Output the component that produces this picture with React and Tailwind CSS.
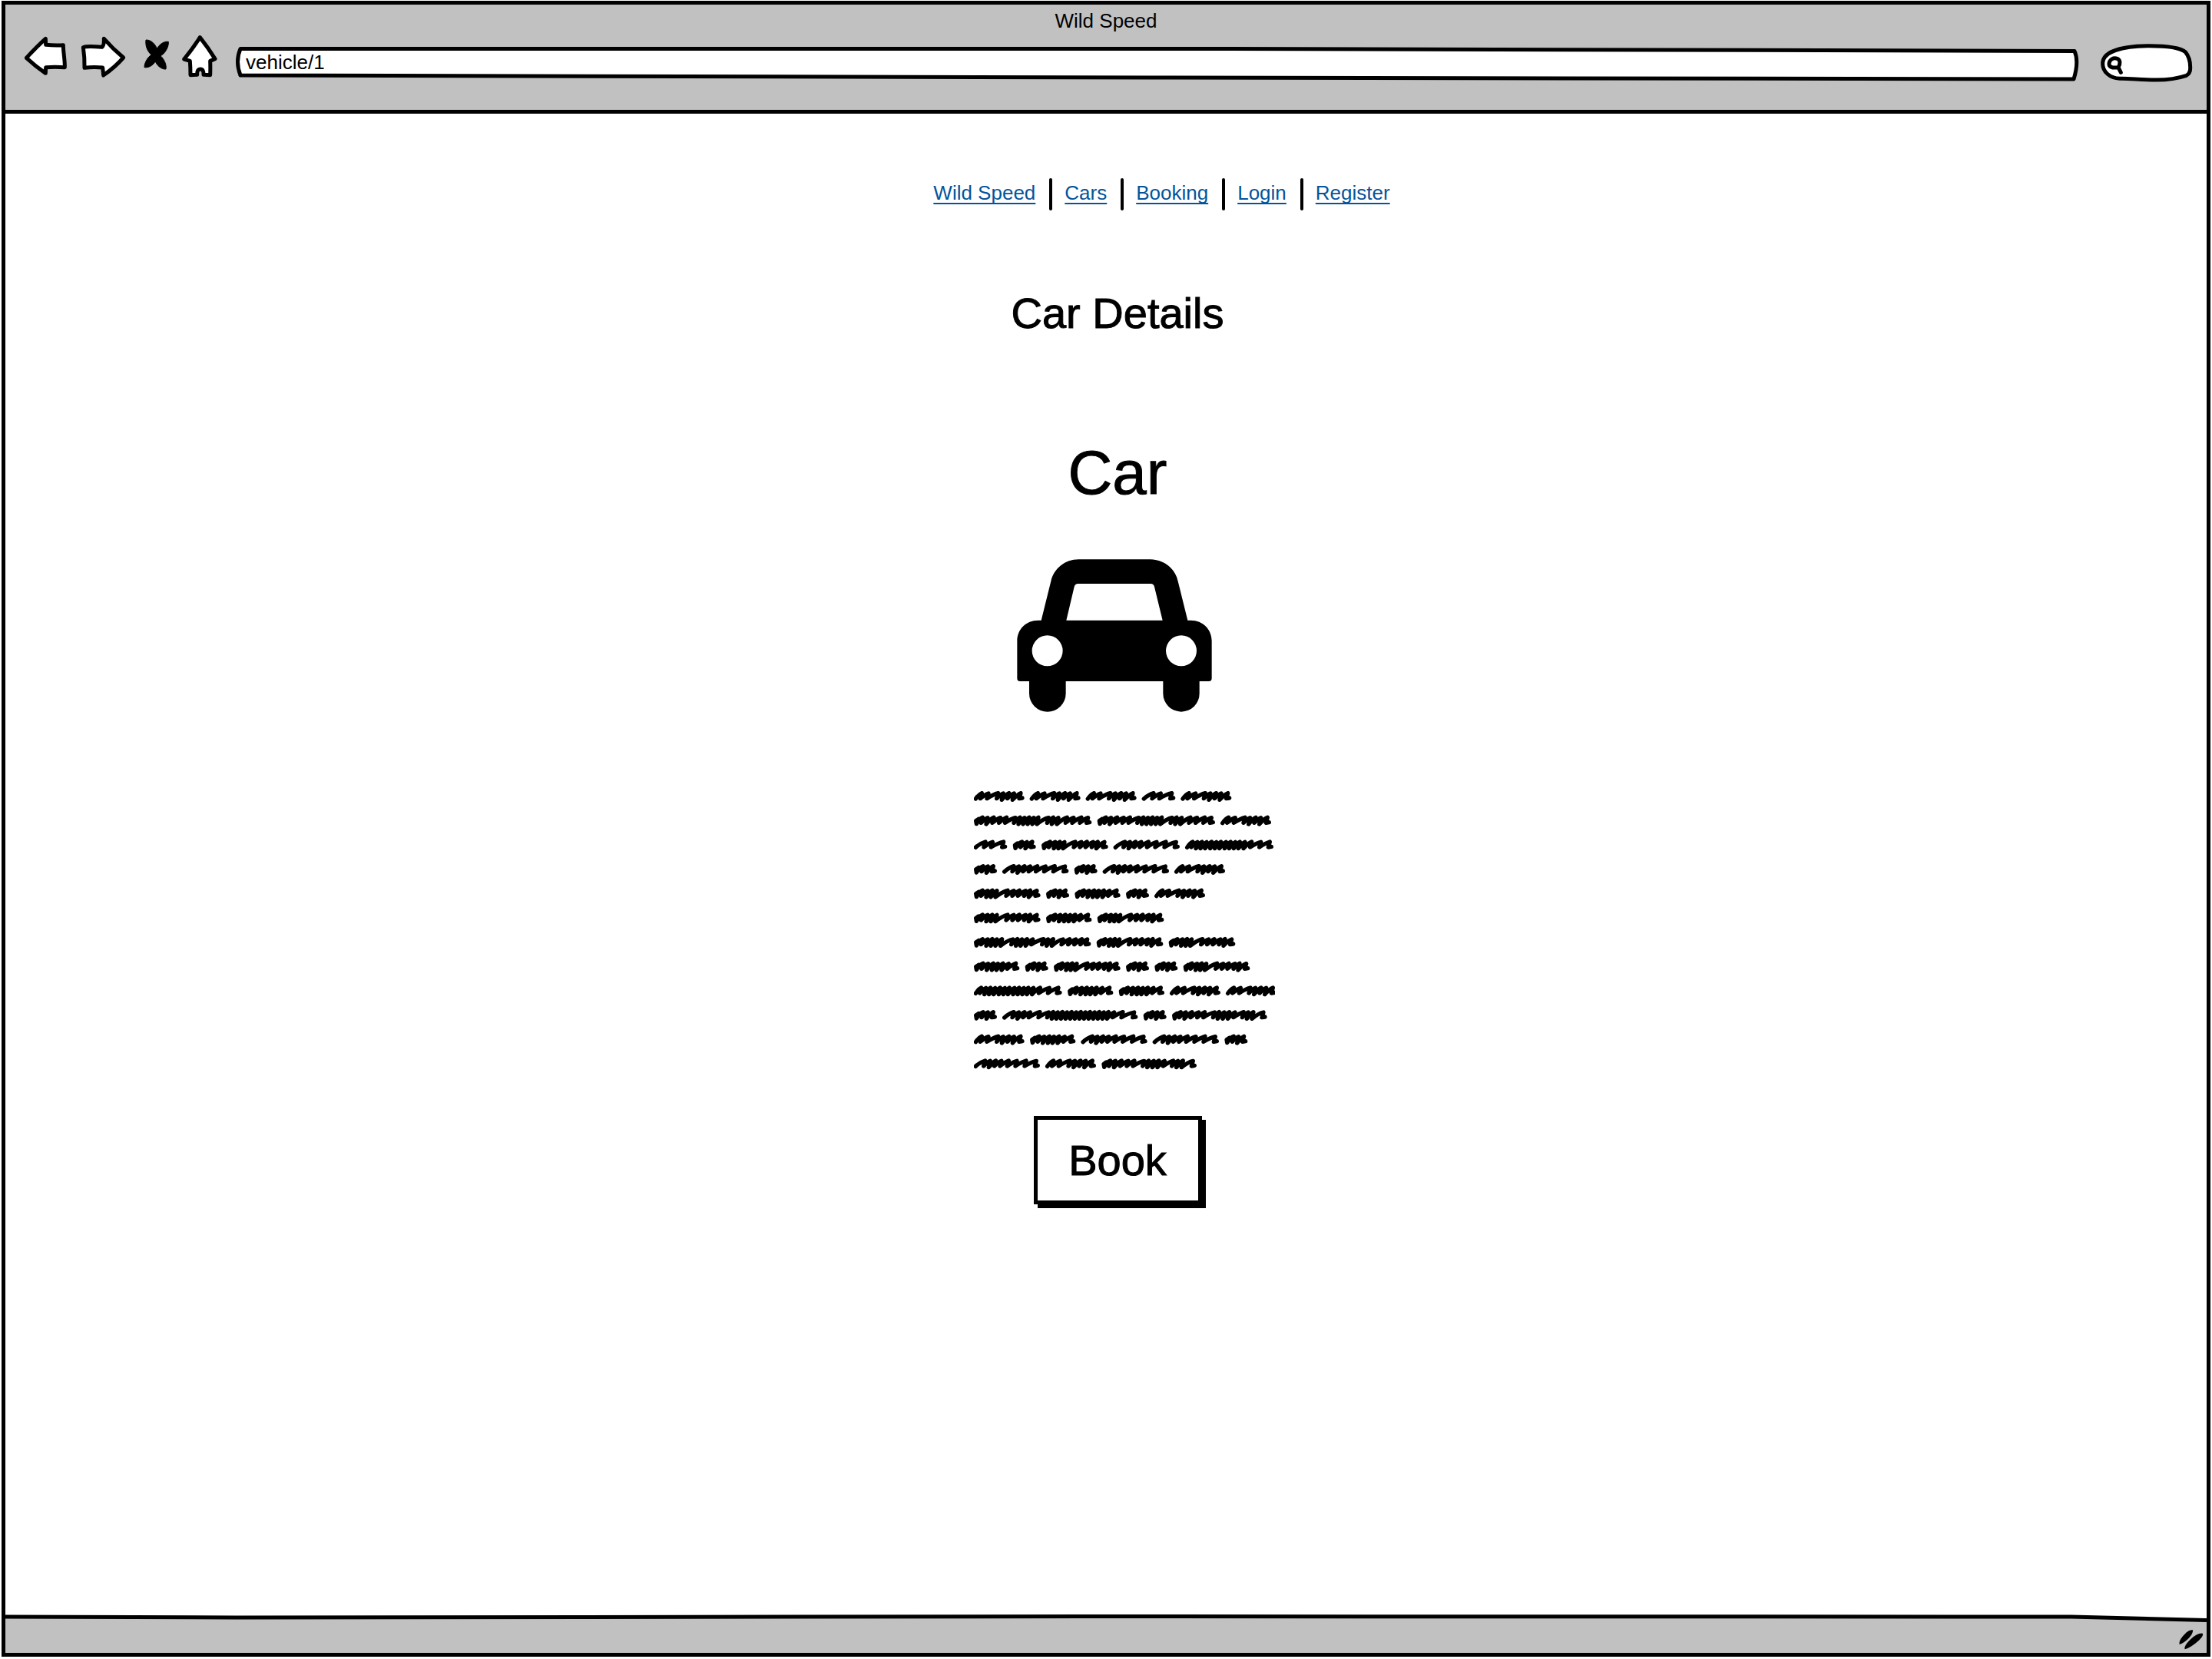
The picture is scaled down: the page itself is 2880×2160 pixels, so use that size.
const LINKS = ["Wild Speed", "Cars", "Booking", "Login", "Register"];

// Horizontal advance of each zigzag tooth; "dense" words start with a thick blob.
const WORDS = {
  a: { width: 192, teeth: [24, 26, 38, 20, 22, 20, 26] },
  b: { width: 125, teeth: [38, 28, 43] },
  c: { width: 85, dense: true, teeth: [29, 19, 21] },
  d: { width: 255, dense: true, teeth: [27, 20, 18, 18, 42, 24, 22, 24, 18, 26] },
  e: { width: 253, teeth: [37, 20, 22, 22, 28, 32, 36, 40] },
  f: { width: 173, dense: true, teeth: [29, 20, 20, 18, 20, 22, 28] },
  g: { width: 455, dense: true, teeth: [27, 20, 24, 26, 24, 34, 18, 18, 18, 18, 18, 40, 18, 20, 34, 26, 30, 26] },
  k: { width: 452, dense: true, teeth: [27, 20, 18, 18, 20, 42, 18, 18, 20, 22, 42, 18, 20, 38, 26, 24, 24, 21] },
  h: { width: 339, teeth: [22, 18, 18, 18, 20, 18, 18, 20, 18, 18, 18, 20, 26, 36, 35] },
  i: { width: 366, dense: true, teeth: [27, 20, 24, 26, 24, 38, 18, 20, 20, 22, 34, 18, 20, 39] },
  j: { width: 523, teeth: [37, 20, 22, 22, 38, 34, 18, 18, 18, 18, 18, 18, 18, 18, 18, 18, 18, 18, 18, 22, 34, 44] },
};
const ROWS = ["aaaba", "gga", "bcdeh", "cecea", "dcfca", "dfd", "kdd", "fcdccd", "hffaa", "cjci", "afeec", "eai"];

function wordPath(word, left, top) {
  let x = left + 7;
  let d = word.dense ? `M${left + 18} ${top + 14}L${left + 8} ${top + 21}L${left + 10} ${top + 33}` : `M${x} ${top + 30}`;
  word.teeth.forEach((step, n) => {
    const next = x + step;
    const low = step < 21 ? 34 : 29;
    d += `Q${x + step * 0.5} ${top + 13} ${next} ${top + 8 + (n % 2)}L${next - 6} ${top + low}`;
    x = next;
  });
  return d + `L${x + 6} ${top + 27}`;
}

function Scribble() {
  const paths = [];
  ROWS.forEach((row, r) => {
    let x = 0;
    [...row].forEach((key) => {
      paths.push(wordPath(WORDS[key], x, r * 95));
      x += WORDS[key].width + 27;
    });
  });
  return (
    <svg role="img" aria-label="Car description" viewBox="0 0 1176 1089" className="mt-[103px] ml-[18px] h-[363px] w-[392px]" fill="none" stroke="black" strokeWidth="16" strokeLinecap="round" strokeLinejoin="round">
      {paths.map((d, n) => (
        <path key={n} d={d} />
      ))}
    </svg>
  );
}

function IconButton({ label, viewBox, size, d, solid }) {
  return (
    <button type="button" aria-label={label} className="shrink-0">
      <svg viewBox={viewBox} className={`block h-16 ${size}`} fill={solid ? "black" : "white"} stroke="black" strokeWidth={solid ? 3 : 15} strokeLinejoin="round">
        <path d={d} />
      </svg>
    </button>
  );
}

function Toolbar() {
  return (
    <div className="mt-[2px] flex gap-[14px] pr-[14px] pl-[23px]">
      <IconButton label="Back" viewBox="90 132 180 192" size="w-[60px]" d="M103 226Q146 180 178 151L179 175Q215 178 247 176C247 205 254 235 253 263Q215 260 179 263L178 286Q140 260 103 226Z" />
      <IconButton label="Forward" viewBox="312 132 192 192" size="w-16" d="M325 185Q340 178 398 184Q407 178 406 151Q440 190 482 225Q450 262 404 294L401 264Q365 260 330 265Q331 225 325 185Z" />
      <IconButton label="Stop" solid viewBox="546 132 120 192" size="w-10" d="M570 156C590 155 606 172 613 190C622 174 640 160 658 163C660 185 642 212 627 218C640 230 652 252 648 270C630 272 612 254 607 240C598 255 580 266 564 263C564 243 578 223 591 214C575 200 567 178 570 156Z" />
      <IconButton label="Home" viewBox="708 132 150 192" size="w-[50px]" d="M781 146Q812 185 840 230L821 238Q822 265 821 293L795 292Q796 270 783 270Q769 270 770 292L744 293Q744 265 742 238L719 231Q753 190 781 146Z" />
      <div className="relative h-16 min-w-0 flex-1">
        <svg viewBox="300 44 2412 64" preserveAspectRatio="none" className="absolute inset-0 h-full w-full" fill="white" stroke="black" strokeWidth="5" strokeLinejoin="round">
          <path vectorEffect="non-scaling-stroke" d="M313 63.500L1600 63.500L2701 66.500Q2707 80 2700 103L1500 101L313 98Q306 80 313 63.500Z" />
        </svg>
        <input aria-label="Address" defaultValue="vehicle/1" className="relative h-16 w-full bg-transparent pt-[10px] pr-5 pl-5 text-[26px] outline-none" />
      </div>
      <div className="relative h-16 w-[133px] shrink-0">
        <svg viewBox="498 132 399 192" className="absolute inset-0 h-full w-full" fill="white" stroke="black" strokeWidth="15" strokeLinecap="round" strokeLinejoin="round">
          <path d="M600 307C560 305 533 280 533 248C533 200 610 180 715 179C790 179 835 185 856 203C870 220 875 245 875 262C876 280 870 290 860 295C830 305 790 312 745 312C680 312 640 306 600 307Z" />
          <path d="M594 263C602 250 603 235 590 229C575 224 560 232 558 248C557 262 570 267 594 263L604 283" />
        </svg>
        <input aria-label="Search" className="relative h-16 w-full bg-transparent pt-[10px] pr-4 pl-10 text-[26px] outline-none" />
      </div>
    </div>
  );
}

function CarIcon() {
  return (
    <svg role="img" aria-label="Car" viewBox="102 504 762 597" className="mt-[72px] mr-2 h-[199px] w-[254px]">
      <path
        fillRule="evenodd"
        d="M235 590C247 540 290 505 343 505H622C675 505 720 540 731 590L769 743H782C828 743 863 778 863 823V970Q863 981 852 981H815V1029A71 71 0 0 1 673 1029V981H293V1029A71.500 71.500 0 0 1 150 1029V981H114Q103 981 103 970V823C103 778 138 743 184 743H197ZM295 743H671L639 612Q636 600 625 600H341Q329 600 326 612ZM281 862A60 60 0 1 0 161 862A60 60 0 1 0 281 862ZM804 862A60 60 0 1 0 684 862A60 60 0 1 0 804 862Z"
      />
    </svg>
  );
}

export default function App() {
  return (
    <div className="flex min-h-screen bg-white px-[2px] pt-px pb-[3px] font-['Liberation_Sans',Arial,sans-serif] text-black">
      <div className="flex flex-1 flex-col border-[5px] border-black">
        <header className="border-b-[5px] border-black bg-[#c1c1c1] pt-[6px] pb-[35px]">
          <p className="text-center text-[26px] leading-[30px]">Wild Speed</p>
          <Toolbar />
        </header>

        <main className="flex flex-1 flex-col items-center pt-[84px]">
          <nav aria-label="Main" className="flex h-[42px] items-center gap-[18px] pl-[145px]">
            {LINKS.map((name, n) => (
              <div key={name} className="flex items-center gap-4">
                {n > 0 && <span className="h-[42px] w-1 rounded-full bg-black" />}
                <a href="#" className="pb-1 text-[26px] leading-[30px] text-[#04549b] underline decoration-2 underline-offset-4 [text-decoration-skip-ink:none]">
                  {name}
                </a>
              </div>
            ))}
          </nav>
          <div className="flex flex-col items-center pl-[30px]">
            <h1 className="mt-[102px] text-[56px] leading-[64px] [-webkit-text-stroke:1px_black]">Car Details</h1>
            <h2 className="mt-[136px] text-[80px] leading-[80px] [-webkit-text-stroke:1px_black]">Car</h2>
            <CarIcon />
            <Scribble />
            <button type="button" className="mt-[60px] h-[115px] w-[219px] border-[5px] border-black bg-white text-[56px] leading-[64px] shadow-[5px_5px_0_black] [-webkit-text-stroke:1px_black]">
              Book
            </button>
          </div>
        </main>

        <footer className="relative flex h-[50px] items-end justify-end bg-[#c1c1c1] pr-1 pb-1">
          <svg viewBox="0 0 2866 12" preserveAspectRatio="none" className="absolute inset-x-0 top-0 h-3 w-full">
            <path fill="white" d="M0 0H2866V7L2690 3H0Z" />
            <path vectorEffect="non-scaling-stroke" fill="none" stroke="black" strokeWidth="5" d="M0 3L300 4L1400 2.500L2690 3Q2780 5 2866 7.500" />
          </svg>
          <svg aria-hidden="true" viewBox="650 124 96 81" className="h-[27px] w-8">
            <path d="M652 184Q648 168 672 144Q690 126 704 128Q706 140 688 160Q668 180 652 184Z" />
            <path d="M673 203Q668 190 694 165Q722 139 742 141Q748 148 728 168Q697 196 673 203Z" />
          </svg>
        </footer>
      </div>
    </div>
  );
}
